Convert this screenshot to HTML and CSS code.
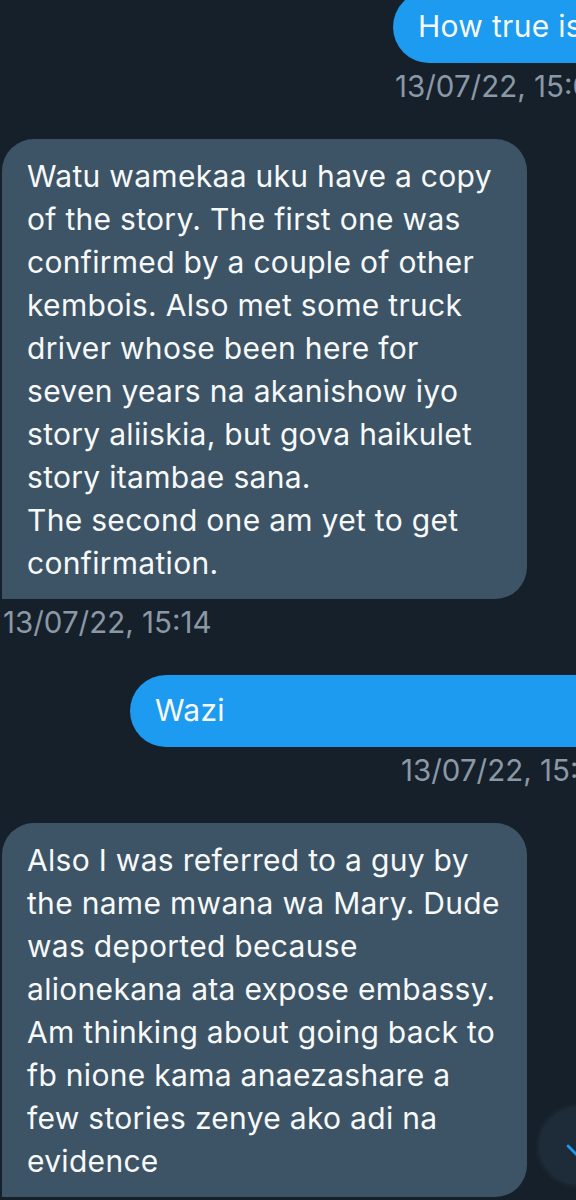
FILE: index.html
```html
<!DOCTYPE html>
<html>
<head>
<meta charset="utf-8">
<link rel="stylesheet" href="styles.css">
</head>
<body>
<main class="thread">
  <section class="msg sent first">
    <div class="bubble out b-how">How true is this</div>
    <div class="time t-how">13/07/22, 15:09</div>
  </section>

  <section class="msg recv">
    <div class="bubble in">
      <span class="line">Watu wamekaa uku have a copy</span>
      <span class="line">of the story. The first one was</span>
      <span class="line">confirmed by a couple of other</span>
      <span class="line">kembois. Also met some truck</span>
      <span class="line">driver whose been here for</span>
      <span class="line">seven years na akanishow iyo</span>
      <span class="line">story aliiskia, but gova haikulet</span>
      <span class="line">story itambae sana.</span>
      <span class="line">The second one am yet to get</span>
      <span class="line">confirmation.</span>
    </div>
    <div class="time t-in">13/07/22, 15:14</div>
  </section>

  <section class="msg sent">
    <div class="bubble out b-wazi">Wazi</div>
    <div class="time t-wazi">13/07/22, 15:15</div>
  </section>

  <section class="msg recv">
    <div class="bubble in">
      <span class="line">Also I was referred to a guy by</span>
      <span class="line">the name mwana wa Mary. Dude</span>
      <span class="line">was deported because</span>
      <span class="line">alionekana ata expose embassy.</span>
      <span class="line">Am thinking about going back to</span>
      <span class="line">fb nione kama anaezashare a</span>
      <span class="line">few stories zenye ako adi na</span>
      <span class="line">evidence</span>
    </div>
  </section>

  <button class="scroll-down" aria-label="Scroll to bottom">
    <svg viewBox="0 0 24 24" width="34" height="34"><path d="M12 4v15M5 12l7 7 7-7" fill="none" stroke="#1d9bf0" stroke-width="2" stroke-linecap="round" stroke-linejoin="round"/></svg>
  </button>
</main>
</body>
</html>
```

FILE: styles.css
```css
html, body {
  margin: 0;
  padding: 0;
  background: #16202b;
  overflow: hidden;
}
body {
  width: 576px;
  height: 1200px;
  font-family: Inter, "Liberation Sans", sans-serif;
  color: #f7f9f9;
}
.thread {
  position: relative;
  width: 576px;
  height: 1200px;
  overflow: hidden;
  display: flex;
  flex-direction: column;
}
.msg {
  display: flex;
  flex-direction: column;
  margin-bottom: 35px;
}
.msg.first {
  margin-top: -9px;
}
.bubble {
  box-sizing: border-box;
  font-size: 30px;
  letter-spacing: 0.3px;
  line-height: 43px;
  white-space: nowrap;
}
.bubble.out {
  background: #1d9bf0;
  height: 72px;
  padding: 14px 25px 15px;
  border-radius: 36px 0 0 36px;
  width: 520px;
}
.b-how { margin-left: 393px; }
.b-wazi { margin-left: 130px; padding-left: 23px; }
.bubble.in {
  background: #3d5466;
  margin-left: 2px;
  width: 525px;
  padding: 16px 25px 14px;
  border-radius: 32px 32px 32px 0;
  display: flex;
  flex-direction: column;
}
.time {
  margin-top: 5px;
  font-size: 29.5px;
  line-height: 36px;
  color: #8b98a5;
  white-space: nowrap;
}
.t-how { margin-left: 395px; }
.t-wazi { margin-left: 401px; }
.t-in { margin-left: 3px; }
.scroll-down {
  position: absolute;
  left: 539px;
  top: 1107px;
  width: 78px;
  height: 78px;
  border-radius: 50%;
  border: none;
  background: #1e2b38;
  box-shadow: 0 0 6px rgba(136,153,166,0.15);
  display: flex;
  align-items: center;
  justify-content: center;
  padding: 0;
}
```
